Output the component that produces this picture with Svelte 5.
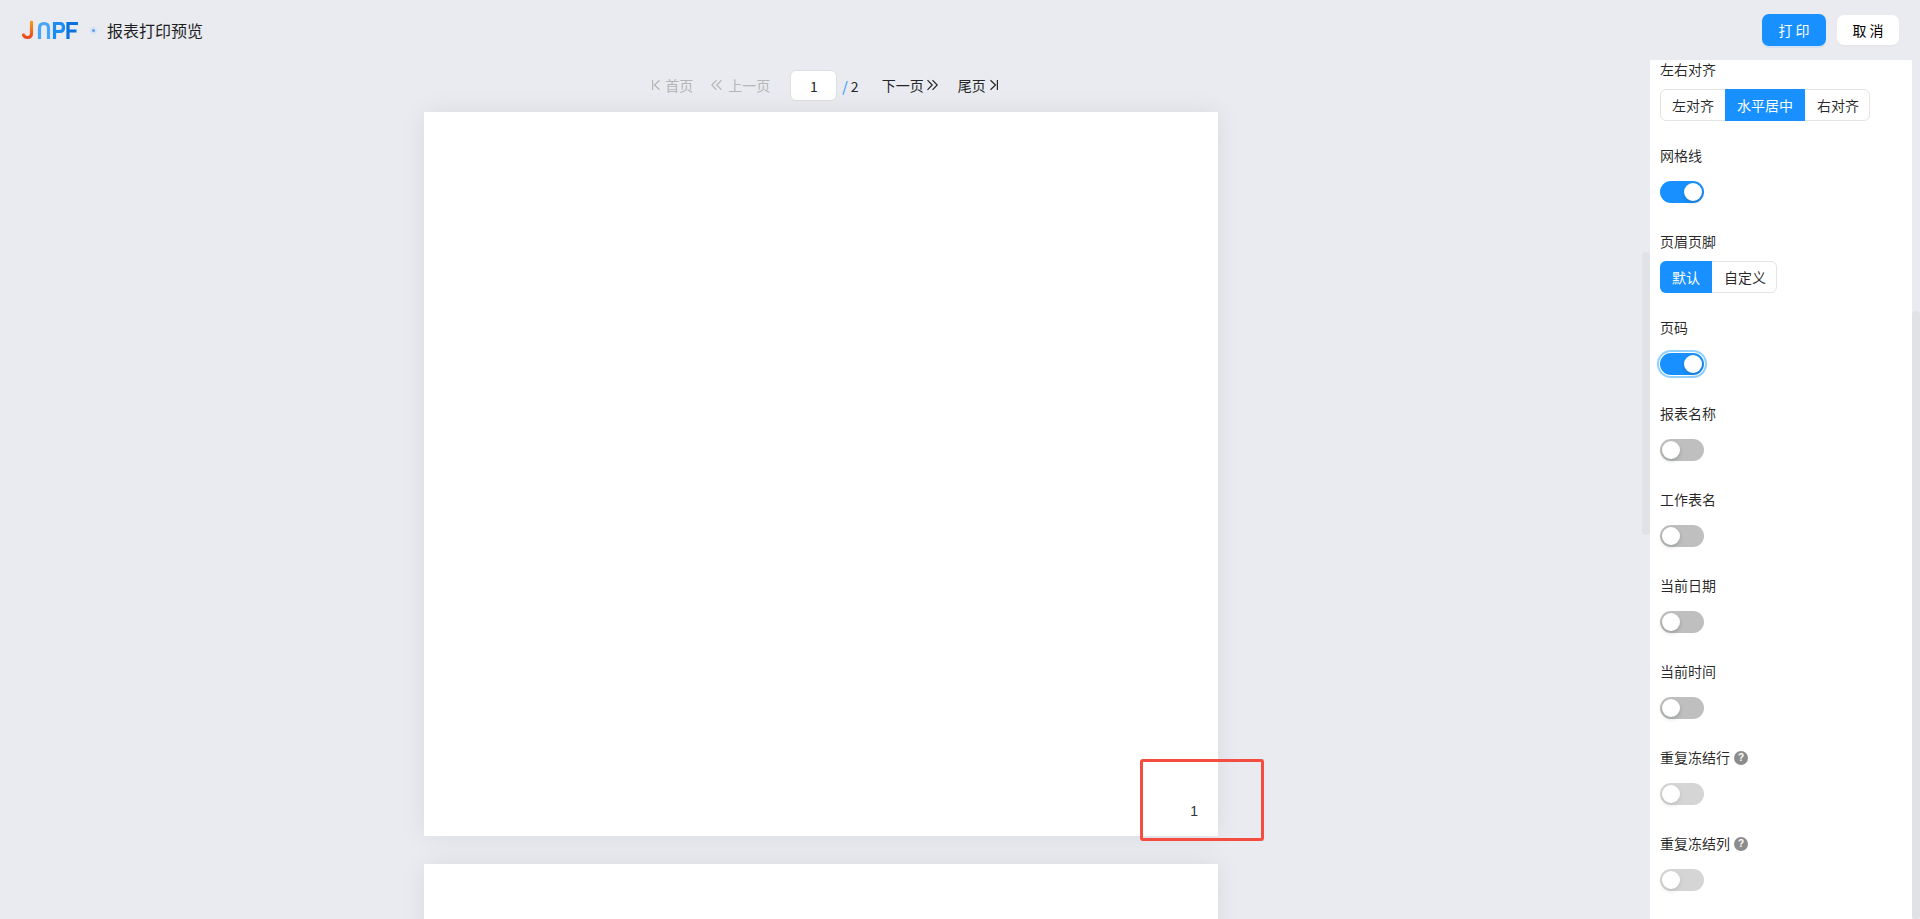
<script>
	const switches = [
		{ label: '网格线', on: true },
		{ group: '页眉页脚', options: ['默认', '自定义'], active: 0 },
		{ label: '页码', on: true, focus: true },
		{ label: '报表名称' },
		{ label: '工作表名' },
		{ label: '当前日期' },
		{ label: '当前时间' },
		{ label: '重复冻结行', help: true, disabled: true },
		{ label: '重复冻结列', help: true, disabled: true }
	];
</script>

<div id="page">
	<header>
		<svg class="logo" width="60" height="20" viewBox="0 0 60 20" fill="none" stroke-width="3.200">
			<defs>
				<linearGradient id="j" x1="0" y1="0" x2="0" y2="1">
					<stop offset="0" stop-color="#f59a22" />
					<stop offset="1" stop-color="#ea4a1c" />
				</linearGradient>
			</defs>
			<path d="M10.500 2V13Q10.500 17.500 6.500 17.500Q3.500 17.500 2.500 15" stroke="url(#j)" stroke-linecap="round" />
			<path d="M18.500 19V8Q18.500 3.500 23 3.500Q27.500 3.500 27.500 8V19" stroke="#45a5f7" />
			<path d="M33.500 19V3.500H39Q42.500 3.500 42.500 7.500Q42.500 11.500 39 11.500H33.500" stroke="#1b8cf2" />
			<path d="M47 19V3.500H57M47 11H55.500" stroke="#0a72dc" />
		</svg>
		<span class="dot"></span>
		<h1>报表打印预览</h1>
		<div class="actions">
			<button class="primary">打 印</button>
			<button class="plain">取 消</button>
		</div>
	</header>

	<main>
		<section id="preview">
			<div id="pager">
				<span class="pg off first">
					<svg width="8" height="12" viewBox="0 0 8 12" fill="none" stroke="currentColor" stroke-width="1.200"><path d="M.6 1V11M7.500 1.200L2.500 6L7.500 10.800" /></svg>
					首页
				</span>
				<span class="pg off">
					<svg width="11" height="12" viewBox="0 0 11 12" fill="none" stroke="currentColor" stroke-width="1.200"><path d="M5.500 1.200L.8 6L5.500 10.800M10.500 1.200L5.800 6L10.500 10.800" /></svg>
					上一页
				</span>
				<input value="1" />
				<span class="total"><i>/</i><span>2</span></span>
				<span class="pg next">
					下一页
					<svg width="11" height="12" viewBox="0 0 11 12" fill="none" stroke="currentColor" stroke-width="1.200"><path d="M.5 1.200L5.200 6L.5 10.800M5.500 1.200L10.200 6L5.500 10.800" /></svg>
				</span>
				<span class="pg last">
					尾页
					<svg width="8" height="12" viewBox="0 0 8 12" fill="none" stroke="currentColor" stroke-width="1.200"><path d="M.5 1.200L5.500 6L.5 10.800M7.400 1V11" /></svg>
				</span>
			</div>
			<div class="sheet"><span class="num">1</span></div>
			<div class="sheet"></div>
			<div class="annotation"></div>
			<div class="thumb left"></div>
		</section>

		<aside>
			<div class="item">
				<div class="label">左右对齐</div>
				<div class="radios wide">
					<span>左对齐</span>
					<span class="active">水平居中</span>
					<span>右对齐</span>
				</div>
			</div>
			{#each switches as s}
				<div class="item">
					{#if s.group}
						<div class="label">{s.group}</div>
						<div class="radios">
							{#each s.options as o, i}
								<span class:active={i === s.active}>{o}</span>
							{/each}
						</div>
					{:else}
						<div class="label">
							{s.label}
							{#if s.help}<b class="help">?</b>{/if}
						</div>
						<div class="control">
							<span class="switch" class:on={s.on} class:focus={s.focus} class:disabled={s.disabled}></span>
						</div>
					{/if}
				</div>
			{/each}
		</aside>
		<div class="rail"><div class="thumb right"></div></div>
	</main>
</div>

<style>
	:global(body) {
		margin: 0;
		background: #e9ebf0;
		overflow: hidden;
	}

	#page {
		height: 919px;
		display: flex;
		flex-direction: column;
		overflow: hidden;
		font-family: 'Noto Sans CJK SC', 'Noto Sans', sans-serif;
		font-size: 14px;
		color: rgba(0, 0, 0, 0.85);
	}

	header {
		flex: 0 0 60px;
		display: flex;
		align-items: center;
		padding: 0 21px 0 21px;
	}

	.logo {
		margin-right: 11px;
	}

	.dot {
		width: 3px;
		height: 3px;
		border-radius: 50%;
		background: #5f9ff5;
		box-shadow: 0 0 0 2px #d5e2f8;
		margin-right: 12px;
	}

	h1 {
		margin: 0;
		font-size: 16px;
		font-weight: 400;
		color: #1f1f1f;
	}

	.actions {
		margin-left: auto;
		display: flex;
		align-items: center;
		gap: 11px;
	}

	button {
		font: inherit;
		border: 0;
		cursor: pointer;
		border-radius: 7px;
	}

	.primary {
		width: 64px;
		height: 32px;
		background: #1890ff;
		color: #fff;
		box-shadow: 0 2px 0 rgba(5, 145, 255, 0.1);
	}

	.plain {
		width: 62px;
		height: 30px;
		background: #fff;
		box-shadow: 0 2px 0 rgba(0, 0, 0, 0.02);
	}

	main {
		flex: 1;
		min-height: 0;
		display: flex;
	}

	#preview {
		position: relative;
		flex: 0 0 1650px;
		box-sizing: border-box;
		padding-right: 8px;
		display: flex;
		flex-direction: column;
		align-items: center;
		overflow: hidden;
	}

	#pager {
		flex: 0 0 52px;
		box-sizing: border-box;
		align-self: stretch;
		display: flex;
		justify-content: center;
		align-items: center;
		padding: 0 0 1px 8px;
		color: #262626;
	}

	.pg {
		display: flex;
		align-items: center;
		gap: 6px;
		white-space: nowrap;
		line-height: 20px;
		margin-top: -1px;
	}

	.pg.off {
		color: #b5b5b5;
		margin-right: 18px;
	}

	.pg.first {
		gap: 5px;
	}

	.pg.next {
		gap: 3px;
	}

	.pg.off + input {
		margin-left: 2px;
	}

	.pg.last {
		gap: 4px;
		margin-left: 20px;
	}

	input {
		box-sizing: border-box;
		width: 47px;
		height: 31px;
		border: 1px solid #dedede;
		border-radius: 6px;
		background: #fff;
		text-align: center;
		font: inherit;
		color: inherit;
		outline: none;
	}

	.total {
		display: flex;
		gap: 3px;
		margin: 0 23px 0 5px;
	}

	.total i {
		color: #1890ff;
		font-style: normal;
	}

	.sheet {
		position: relative;
		flex: 0 0 724px;
		width: 794px;
		margin-bottom: 28px;
		background: #fff;
		box-shadow: 0 0 24px rgba(0, 0, 0, 0.07);
	}

	.num {
		position: absolute;
		right: 20px;
		bottom: 17px;
		font: 14px/16px 'Liberation Sans', sans-serif;
		color: #333;
	}

	.annotation {
		position: absolute;
		left: 1140px;
		top: 699px;
		width: 124px;
		height: 82px;
		box-sizing: border-box;
		border: 3px solid #f44c3e;
		border-radius: 3px;
	}

	.thumb {
		position: absolute;
		width: 8px;
		background: #e1e2e5;
		border-radius: 4px;
	}

	.thumb.left {
		right: 0;
		top: 192px;
		height: 283px;
	}

	aside {
		flex: 0 0 262px;
		box-sizing: border-box;
		background: #fff;
		padding: 0 10px;
		overflow: hidden;
	}

	.item {
		display: flow-root;
		height: 86px;
	}

	.label {
		display: flex;
		align-items: center;
		gap: 4px;
		height: 22px;
		margin-top: -2px;
		margin-bottom: 9px;
		line-height: 22px;
	}

	.help {
		width: 14px;
		height: 14px;
		margin-top: 1px;
		border-radius: 50%;
		background: #8c8c8c;
		color: #fff;
		font: 700 10px/14px 'Liberation Sans', sans-serif;
		text-align: center;
	}

	.radios {
		display: inline-flex;
		height: 32px;
		box-sizing: border-box;
		border: 1px solid #e4e4e4;
		border-radius: 6px;
	}

	.radios span {
		padding: 0 12px;
		margin: -1px 0;
		height: 32px;
		line-height: 32px;
	}

	.radios span:first-child {
		border-radius: 6px 0 0 6px;
		margin-left: -1px;
	}

	.radios span:last-child {
		padding-right: 10px;
	}

	.radios.wide span:first-child {
		padding-right: 11px;
	}

	.radios span.active {
		background: #1890ff;
		color: #fff;
	}

	.control {
		height: 32px;
		padding-top: 6px;
		box-sizing: border-box;
	}

	.switch {
		position: relative;
		display: block;
		width: 44px;
		height: 22px;
		border-radius: 11px;
		background: #bfbfbf;
	}

	.switch::after {
		content: '';
		position: absolute;
		top: 2px;
		left: 2px;
		width: 18px;
		height: 18px;
		border-radius: 50%;
		background: #fff;
		box-shadow: 0 2px 4px rgba(0, 35, 11, 0.2);
	}

	.switch.on {
		background: #1890ff;
	}

	.switch.on::after {
		left: 24px;
	}

	.switch.focus {
		box-shadow: 0 0 0 1px #fff, 0 0 0 3px #91d0ff;
	}

	.switch.disabled {
		opacity: 0.65;
	}

	.rail {
		position: relative;
		flex: 0 0 8px;
	}

	.thumb.right {
		left: 0;
		top: 251px;
		bottom: 0;
	}
</style>
